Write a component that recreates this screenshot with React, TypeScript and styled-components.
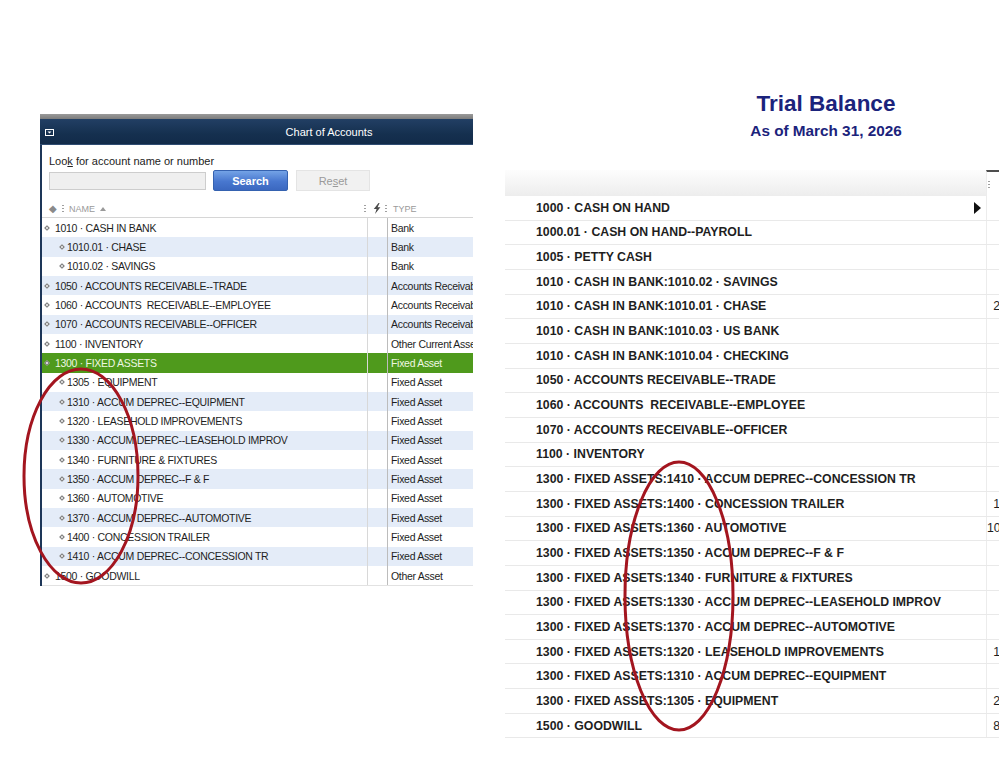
import React from 'react';
import styled, { createGlobalStyle } from 'styled-components';

interface IAccount {
  name: string;
  level: number;
  type: string;
  selected?: boolean;
}

interface IBalance {
  name: string;
  amount?: string;
  expand?: boolean;
}

const accounts: IAccount[] = [
  { name: '1010 · CASH IN BANK', level: 0, type: 'Bank' },
  { name: '1010.01 · CHASE', level: 1, type: 'Bank' },
  { name: '1010.02 · SAVINGS', level: 1, type: 'Bank' },
  { name: '1050 · ACCOUNTS RECEIVABLE--TRADE', level: 0, type: 'Accounts Receivable' },
  { name: '1060 · ACCOUNTS  RECEIVABLE--EMPLOYEE', level: 0, type: 'Accounts Receivable' },
  { name: '1070 · ACCOUNTS RECEIVABLE--OFFICER', level: 0, type: 'Accounts Receivable' },
  { name: '1100 · INVENTORY', level: 0, type: 'Other Current Asset' },
  { name: '1300 · FIXED ASSETS', level: 0, type: 'Fixed Asset', selected: true },
  { name: '1305 · EQUIPMENT', level: 1, type: 'Fixed Asset' },
  { name: '1310 · ACCUM DEPREC--EQUIPMENT', level: 1, type: 'Fixed Asset' },
  { name: '1320 · LEASEHOLD IMPROVEMENTS', level: 1, type: 'Fixed Asset' },
  { name: '1330 · ACCUM DEPREC--LEASEHOLD IMPROV', level: 1, type: 'Fixed Asset' },
  { name: '1340 · FURNITURE & FIXTURES', level: 1, type: 'Fixed Asset' },
  { name: '1350 · ACCUM DEPREC--F & F', level: 1, type: 'Fixed Asset' },
  { name: '1360 · AUTOMOTIVE', level: 1, type: 'Fixed Asset' },
  { name: '1370 · ACCUM DEPREC--AUTOMOTIVE', level: 1, type: 'Fixed Asset' },
  { name: '1400 · CONCESSION TRAILER', level: 1, type: 'Fixed Asset' },
  { name: '1410 · ACCUM DEPREC--CONCESSION TR', level: 1, type: 'Fixed Asset' },
  { name: '1500 · GOODWILL', level: 0, type: 'Other Asset' },
];

const balances: IBalance[] = [
  { name: '1000 · CASH ON HAND', expand: true },
  { name: '1000.01 · CASH ON HAND--PAYROLL' },
  { name: '1005 · PETTY CASH' },
  { name: '1010 · CASH IN BANK:1010.02 · SAVINGS' },
  { name: '1010 · CASH IN BANK:1010.01 · CHASE', amount: '25,310.00' },
  { name: '1010 · CASH IN BANK:1010.03 · US BANK' },
  { name: '1010 · CASH IN BANK:1010.04 · CHECKING' },
  { name: '1050 · ACCOUNTS RECEIVABLE--TRADE' },
  { name: '1060 · ACCOUNTS  RECEIVABLE--EMPLOYEE' },
  { name: '1070 · ACCOUNTS RECEIVABLE--OFFICER' },
  { name: '1100 · INVENTORY' },
  { name: '1300 · FIXED ASSETS:1410 · ACCUM DEPREC--CONCESSION TR' },
  { name: '1300 · FIXED ASSETS:1400 · CONCESSION TRAILER', amount: '12,500.00' },
  { name: '1300 · FIXED ASSETS:1360 · AUTOMOTIVE', amount: '104,800.00' },
  { name: '1300 · FIXED ASSETS:1350 · ACCUM DEPREC--F & F' },
  { name: '1300 · FIXED ASSETS:1340 · FURNITURE & FIXTURES' },
  { name: '1300 · FIXED ASSETS:1330 · ACCUM DEPREC--LEASEHOLD IMPROV' },
  { name: '1300 · FIXED ASSETS:1370 · ACCUM DEPREC--AUTOMOTIVE' },
  { name: '1300 · FIXED ASSETS:1320 · LEASEHOLD IMPROVEMENTS', amount: '18,250.00' },
  { name: '1300 · FIXED ASSETS:1310 · ACCUM DEPREC--EQUIPMENT' },
  { name: '1300 · FIXED ASSETS:1305 · EQUIPMENT', amount: '24,600.00' },
  { name: '1500 · GOODWILL', amount: '85,000.00' },
];

function App() {
  return (
    <>
      <GlobalStyle />
      <Page>
        <AccountsWindow>
          <WindowInner>
            <TitleStrip />
            <TitleBar>
              <MenuIcon width="9" height="7" viewBox="0 0 9 7">
                <rect x="0.5" y="0.5" width="8" height="6" fill="none" stroke="#fff" />
                <path d="M2.5 2.5 H6.5 L4.5 4.5 Z" fill="#fff" />
              </MenuIcon>
              <WindowTitle>Chart of Accounts</WindowTitle>
            </TitleBar>
            <WindowBody>
              <SearchArea>
                <SearchLabel>
                  Loo<u>k</u> for account name or number
                </SearchLabel>
                <SearchRow>
                  <SearchInput />
                  <SearchButton>Search</SearchButton>
                  <ResetButton>
                    Re<u>s</u>et
                  </ResetButton>
                </SearchRow>
              </SearchArea>

              <HeadRow>
                <NameHead>
                  <HeadDiamond>◆</HeadDiamond>
                  <Grip />
                  <span>NAME</span>
                  <SortArrow />
                  <Grip $end />
                </NameHead>
                <BoltHead>
                  <svg width="8" height="11" viewBox="0 0 8 11">
                    <path d="M5.5 0 L0.8 6 H3.6 L2 11 L7.4 4.2 H4.6 L6.6 0 Z" fill="#4a4a4a" />
                  </svg>
                  <Grip $end />
                </BoltHead>
                <TypeHead>TYPE</TypeHead>
              </HeadRow>

              <AccountList>
                {accounts.map((acc, i) => (
                  <AccountRow key={acc.name} $stripe={i % 2 === 1} $selected={!!acc.selected}>
                    <NameCell $level={acc.level}>
                      <Bullet />
                      {acc.name}
                    </NameCell>
                    <BoltCell />
                    <TypeCell>{acc.type}</TypeCell>
                  </AccountRow>
                ))}
              </AccountList>
            </WindowBody>
          </WindowInner>
        </AccountsWindow>

        <Report>
          <ReportInner>
            <ReportTitle>Trial Balance</ReportTitle>
            <ReportDate>As of March 31, 2026</ReportDate>
            <ReportHead>
              <ReportNameHead />
              <ReportAmountHead>
                <Grip />
              </ReportAmountHead>
            </ReportHead>
            {balances.map(b => (
              <BalanceRow key={b.name}>
                <BalanceName>
                  {b.name}
                  {b.expand && <ExpandArrow />}
                </BalanceName>
                <BalanceAmount>{b.amount}</BalanceAmount>
              </BalanceRow>
            ))}
          </ReportInner>
        </Report>

        <Circle $left={21} $top={366} width="120" height="220" viewBox="0 0 120 220">
          <ellipse cx="60" cy="110" rx="57" ry="107" fill="none" stroke="#a3151f" strokeWidth="3" />
        </Circle>
        <Circle $left={622} $top={459} width="114" height="274" viewBox="0 0 114 274">
          <ellipse cx="57" cy="137" rx="54" ry="134" fill="none" stroke="#a3151f" strokeWidth="3" />
        </Circle>
      </Page>
    </>
  );
}

const GlobalStyle = createGlobalStyle`
  body {
    margin: 0;
    background: #fff;
    font-family: "Liberation Sans", Arial, sans-serif;
    overflow: hidden;
  }
  * { box-sizing: border-box; }
`;

const Page = styled.div`
  position: relative;
  display: flex;
  align-items: flex-start;
  width: 999px;
  height: 772px;
  padding-left: 40px;
  overflow: hidden;
`;

/* Chart of Accounts window */

const AccountsWindow = styled.section`
  flex-shrink: 0;
  width: 433px;
  margin-top: 114px;
  overflow: hidden;
`;

const WindowInner = styled.div`
  width: 578px;
`;

const TitleStrip = styled.div`
  height: 5px;
  background: linear-gradient(#9a9a9a, #7c7c7c);
`;

const TitleBar = styled.div`
  display: grid;
  grid-template-columns: 24px 1fr 24px;
  align-items: center;
  height: 26px;
  background: linear-gradient(#223f64, #15304f 60%, #122b49);
  border-bottom: 1px solid #2f4c72;
  color: #fff;
`;

const MenuIcon = styled.svg`
  margin-left: 5px;
  margin-top: 2px;
`;

const WindowTitle = styled.div`
  text-align: center;
  font-size: 11px;
`;

const WindowBody = styled.div`
  border-left: 2px solid #1d3658;
`;

const SearchArea = styled.div`
  padding: 10px 0 0 7px;
`;

const SearchLabel = styled.div`
  font-size: 11px;
  line-height: 13px;
  color: #222;
`;

const SearchRow = styled.div`
  display: flex;
  align-items: center;
  margin-top: 2px;
  height: 21px;
`;

const SearchInput = styled.div`
  width: 157px;
  height: 18px;
  background: #efefef;
  border: 1px solid #cdcdcd;
`;

const SearchButton = styled.div`
  display: flex;
  align-items: center;
  justify-content: center;
  width: 75px;
  height: 21px;
  margin-left: 7px;
  border: 1px solid #3562b0;
  border-radius: 2px;
  background: linear-gradient(#74a3e6, #4877cf 55%, #3b68c0);
  color: #fff;
  font-size: 11px;
  font-weight: bold;
`;

const ResetButton = styled.div`
  display: flex;
  align-items: center;
  justify-content: center;
  width: 74px;
  height: 21px;
  margin-left: 8px;
  border: 1px solid #e4e4e4;
  background: #f1f1f1;
  color: #9a9a9a;
  font-size: 11px;
`;

const HeadRow = styled.div`
  display: grid;
  grid-template-columns: 325px 21px 1fr;
  height: 18px;
  margin-top: 9px;
  border-bottom: 1px solid #d6d6d6;
  font-size: 9px;
  color: #9a9a9a;
`;

const NameHead = styled.div`
  display: flex;
  align-items: center;
  gap: 5px;
  padding-left: 7px;
`;

const HeadDiamond = styled.span`
  font-size: 10px;
  color: #8a8a8a;
`;

const Grip = styled.span<{ $end?: boolean }>`
  width: 2px;
  height: 9px;
  margin-left: ${props => (props.$end ? 'auto' : '0')};
  margin-right: ${props => (props.$end ? '1px' : '0')};
  background: radial-gradient(circle, #a0a0a0 0.8px, transparent 1.1px) repeat-y;
  background-size: 2px 3px;
`;

const SortArrow = styled.span`
  width: 0;
  height: 0;
  border-left: 3px solid transparent;
  border-right: 3px solid transparent;
  border-bottom: 4px solid #9a9a9a;
`;

const BoltHead = styled.div`
  display: flex;
  align-items: center;
  padding-left: 6px;
`;

const TypeHead = styled.div`
  display: flex;
  align-items: center;
  padding-left: 5px;
`;

const AccountList = styled.div`
  border-bottom: 1px solid #e2e2e2;
`;

const AccountRow = styled.div<{ $stripe: boolean; $selected: boolean }>`
  display: grid;
  grid-template-columns: 325px 21px 1fr;
  height: 19.33px;
  font-size: 10.5px;
  letter-spacing: -0.3px;
  white-space: pre;
  color: ${props => (props.$selected ? '#eef7e2' : '#1e1e1e')};
  background: ${props => (props.$selected ? '#4f9a1c' : props.$stripe ? '#e4ecf8' : '#fff')};
`;

const NameCell = styled.div<{ $level: number }>`
  display: flex;
  align-items: center;
  gap: ${props => (props.$level ? '3px' : '6px')};
  padding-left: ${props => (props.$level ? '18px' : '3px')};
`;

const Bullet = styled.span`
  flex-shrink: 0;
  width: 4px;
  height: 4px;
  transform: rotate(45deg);
  border: 1px solid #777;
  background: #e6e6e6;
`;

const BoltCell = styled.div`
  border-left: 1px solid #d8d8d8;
  border-right: 1px solid #bcbcbc;
`;

const TypeCell = styled.div`
  display: flex;
  align-items: center;
  padding-left: 3px;
`;

/* Trial Balance report */

const Report = styled.section`
  flex-shrink: 0;
  width: 494px;
  margin-left: 32px;
  padding-top: 91px;
  overflow: hidden;
`;

const ReportInner = styled.div`
  width: 642px;
`;

const ReportTitle = styled.h1`
  margin: 0;
  text-align: center;
  font-size: 22.5px;
  line-height: 26px;
  font-weight: bold;
  color: #1b237c;
`;

const ReportDate = styled.h2`
  margin: 5px 0 0;
  text-align: center;
  font-size: 15.3px;
  line-height: 18px;
  font-weight: bold;
  color: #1b237c;
`;

const ReportHead = styled.div`
  display: grid;
  grid-template-columns: 481px 1fr;
  height: 26px;
  margin-top: 30px;
`;

const ReportNameHead = styled.div`
  background: linear-gradient(#fdfdfd, #ededed);
`;

const ReportAmountHead = styled.div`
  display: flex;
  align-items: center;
  padding-left: 1px;
  border-top: 2px solid #4e4e4e;
  border-left: 1px solid #ececec;
`;

const BalanceRow = styled.div`
  display: grid;
  grid-template-columns: 481px 1fr;
  height: 24.67px;
  border-bottom: 1px solid #e9e9e9;
  font-size: 12.3px;
  color: #1e1e1e;
  white-space: pre;
`;

const BalanceName = styled.div`
  display: flex;
  align-items: center;
  justify-content: space-between;
  padding: 0 5px 0 31px;
  font-weight: bold;
`;

const ExpandArrow = styled.span`
  width: 0;
  height: 0;
  border-top: 6px solid transparent;
  border-bottom: 6px solid transparent;
  border-left: 7px solid #111;
`;

const BalanceAmount = styled.div`
  display: flex;
  align-items: center;
  justify-content: flex-end;
  padding-right: 99px;
  border-left: 1px solid #ececec;
`;

/* red pen marks drawn over both panels */

const Circle = styled.svg<{ $left: number; $top: number }>`
  position: absolute;
  left: ${props => props.$left}px;
  top: ${props => props.$top}px;
  overflow: visible;
  pointer-events: none;
`;

export default App;
